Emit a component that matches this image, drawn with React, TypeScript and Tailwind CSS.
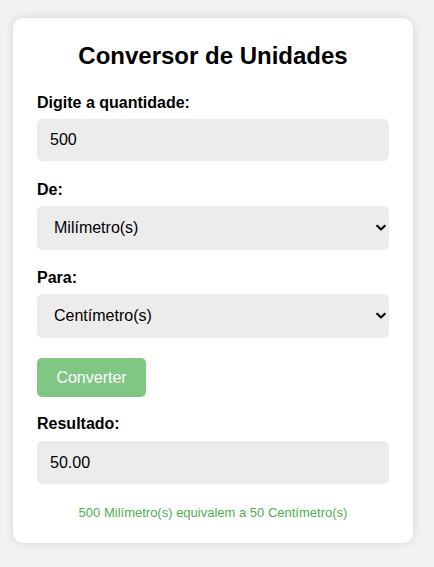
import * as React from 'react';

const UNITS = ['Milímetro(s)', 'Centímetro(s)', 'Metro(s)', 'Quilômetro(s)'];

function Chevron() {
  return (
    <svg
      className="pointer-events-none absolute right-[3px] top-1/2 -translate-y-1/2"
      width="10"
      height="7"
      viewBox="0 0 10 7"
      fill="none"
    >
      <path d="M1.2 1.2 5 5 8.8 1.2" stroke="#111" strokeWidth="2.2" strokeLinecap="round" strokeLinejoin="round" />
    </svg>
  );
}

function UnitSelect({ value, onChange }: { value: string; onChange: (v: string) => void }) {
  return (
    <div className="relative">
      <select
        value={value}
        onChange={(e) => onChange(e.target.value)}
        className="block h-[44px] w-full appearance-none rounded-[5px] border border-[#ececec] bg-[#ececec] pl-[16px] pr-6 text-[16px] text-black outline-none"
      >
        {UNITS.map((u) => (
          <option key={u} value={u}>{u}</option>
        ))}
      </select>
      <Chevron />
    </div>
  );
}

export default function App() {
  const [qty, setQty] = React.useState('500');
  const [from, setFrom] = React.useState('Milímetro(s)');
  const [to, setTo] = React.useState('Centímetro(s)');

  return (
    <div
      className="min-h-screen bg-[#f2f2f2] pt-[18px] pl-[13px]"
      style={{ fontFamily: '"Liberation Sans", Arial, sans-serif' }}
    >
      <div className="w-[400px] rounded-[10px] bg-white px-[24px] pt-[24px] pb-[23px] shadow-[0_0_10px_rgba(0,0,0,0.12)]">
        <h2 className="mb-[24px] text-center text-[24px] font-bold leading-[28px] text-black">
          Conversor de Unidades
        </h2>

        <label className="mb-[7px] block text-[16px] font-bold leading-[18px] text-black">Digite a quantidade:</label>
        <input
          value={qty}
          onChange={(e) => setQty(e.target.value)}
          className="block h-[42px] w-full rounded-[5px] border border-[#ececec] bg-[#ececec] px-[12px] text-[16px] text-black outline-none"
        />

        <label className="mt-[20px] mb-[7px] block text-[16px] font-bold leading-[18px] text-black">De:</label>
        <UnitSelect value={from} onChange={setFrom} />

        <label className="mt-[19px] mb-[7px] block text-[16px] font-bold leading-[18px] text-black">Para:</label>
        <UnitSelect value={to} onChange={setTo} />

        <button className="mt-[20px] block h-[39px] w-[109px] rounded-[5px] bg-[#81c784] text-[16px] text-white">
          Converter
        </button>

        <label className="mt-[18px] mb-[8px] block text-[16px] font-bold leading-[18px] text-black">Resultado:</label>
        <input
          readOnly
          value="50.00"
          className="block h-[43px] w-full rounded-[5px] border border-[#ececec] bg-[#ececec] px-[12px] text-[16px] text-black outline-none"
        />

        <p className="mt-[21px] text-center text-[13px] leading-[15px] text-[#4caf50]">
          500 Milímetro(s) equivalem a 50 Centímetro(s)
        </p>
      </div>
    </div>
  );
}
